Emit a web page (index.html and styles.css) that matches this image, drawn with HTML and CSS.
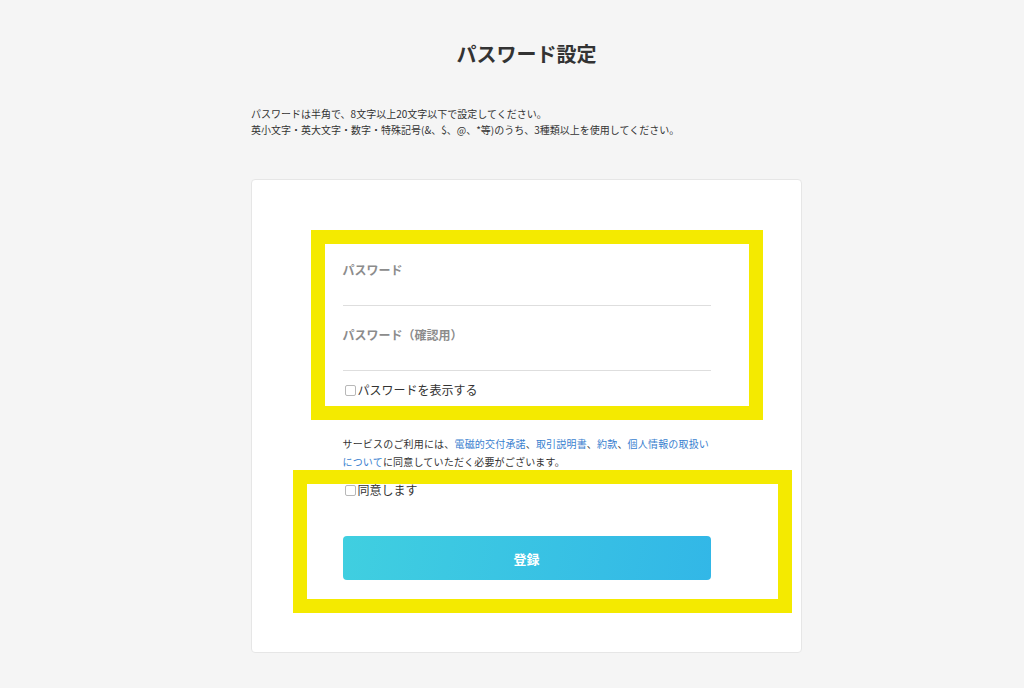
FILE: index.html
```html
<!DOCTYPE html>
<html lang="ja">
<head>
<meta charset="utf-8">
<title>パスワード設定</title>
<link rel="stylesheet" href="styles.css">
</head>
<body>
<div class="page">
  <h1 class="title">パスワード設定</h1>
  <p class="intro">パスワードは半角で、8文字以上20文字以下で設定してください。<br>英小文字・英大文字・数字・特殊記号(&amp;、$、@、*等)のうち、3種類以上を使用してください。</p>
  <div class="card">
    <div class="form">
      <div class="field">
        <label class="label">パスワード</label>
        <input class="input" type="password">
      </div>
      <div class="field field-2">
        <label class="label">パスワード（確認用）</label>
        <input class="input" type="password">
      </div>
      <div class="check check-show"><span class="box"></span><span>パスワードを表示する</span></div>
      <p class="terms">サービスのご利用には、<a href="#">電磁的交付承諾</a>、<a href="#">取引説明書</a>、<a href="#">約款</a>、<a href="#">個人情報の取扱い</a><a href="#">について</a>に同意していただく必要がございます。</p>
      <div class="check check-agree"><span class="box"></span><span>同意します</span></div>
      <button class="submit" type="button">登録</button>
    </div>
    <div class="highlight hl-1"></div>
    <div class="highlight hl-2"></div>
  </div>
</div>
</body>
</html>
```
FILE: styles.css
```css
* { box-sizing: border-box; }
html, body { margin: 0; padding: 0; }
body {
  background: #f5f5f5;
  font-family: "Noto Sans CJK JP", "Noto Sans", sans-serif;
  color: #333;
  padding-left: 29px;
}
.page {
  width: 551px;
  margin: 0 auto;
  padding-top: 40px;
}
.title {
  margin: 0;
  font-size: 20px;
  line-height: 28px;
  font-weight: 700;
  text-align: center;
  color: #333;
}
.intro {
  margin: 38px 0 0;
  font-size: 10px;
  line-height: 16px;
  color: #333;
}
.card {
  position: relative;
  margin-top: 41px;
  background: #fff;
  border: 1px solid #e6e6e6;
  border-radius: 4px;
  padding: 81px 0 72px;
}
.form {
  width: 368px;
  margin: 0 auto;
}
.field { display: flex; flex-direction: column; }
.field-2 { margin-top: 20px; }
.label {
  font-size: 12px;
  line-height: 18px;
  font-weight: 700;
  color: #8c8c8c;
}
.input {
  height: 27px;
  border: none;
  border-bottom: 1px solid #dedede;
  outline: none;
  background: transparent;
  padding: 0;
}
.check {
  display: flex;
  align-items: center;
  font-size: 12px;
  line-height: 18px;
  color: #333;
}
.check-show { margin-top: 10px; }
.box {
  width: 11px;
  height: 11px;
  border: 1px solid #b8b8b8;
  border-radius: 2px;
  margin: 1px 2px 0 2px;
  background: #fff;
}
.terms {
  margin: 36px 0 0;
  font-size: 10px;
  line-height: 18px;
  letter-spacing: 0.18px;
  color: #333;
}
.terms a { color: #3a7fcf; text-decoration: none; }
.check-agree { margin-top: 10px; }
.submit {
  display: block;
  width: 100%;
  height: 44px;
  margin-top: 37px;
  border: none;
  border-radius: 4px;
  background: linear-gradient(100deg, #40cfe0 0%, #32b7e7 100%);
  color: #fff;
  font-family: inherit;
  font-size: 13px;
  font-weight: 700;
}
.highlight {
  position: absolute;
  border: 14px solid #f4ea00;
  pointer-events: none;
}
.hl-1 { left: 59px; top: 50px; width: 452px; height: 190px; }
.hl-2 { left: 41px; top: 290px; width: 499px; height: 143px; }
```
